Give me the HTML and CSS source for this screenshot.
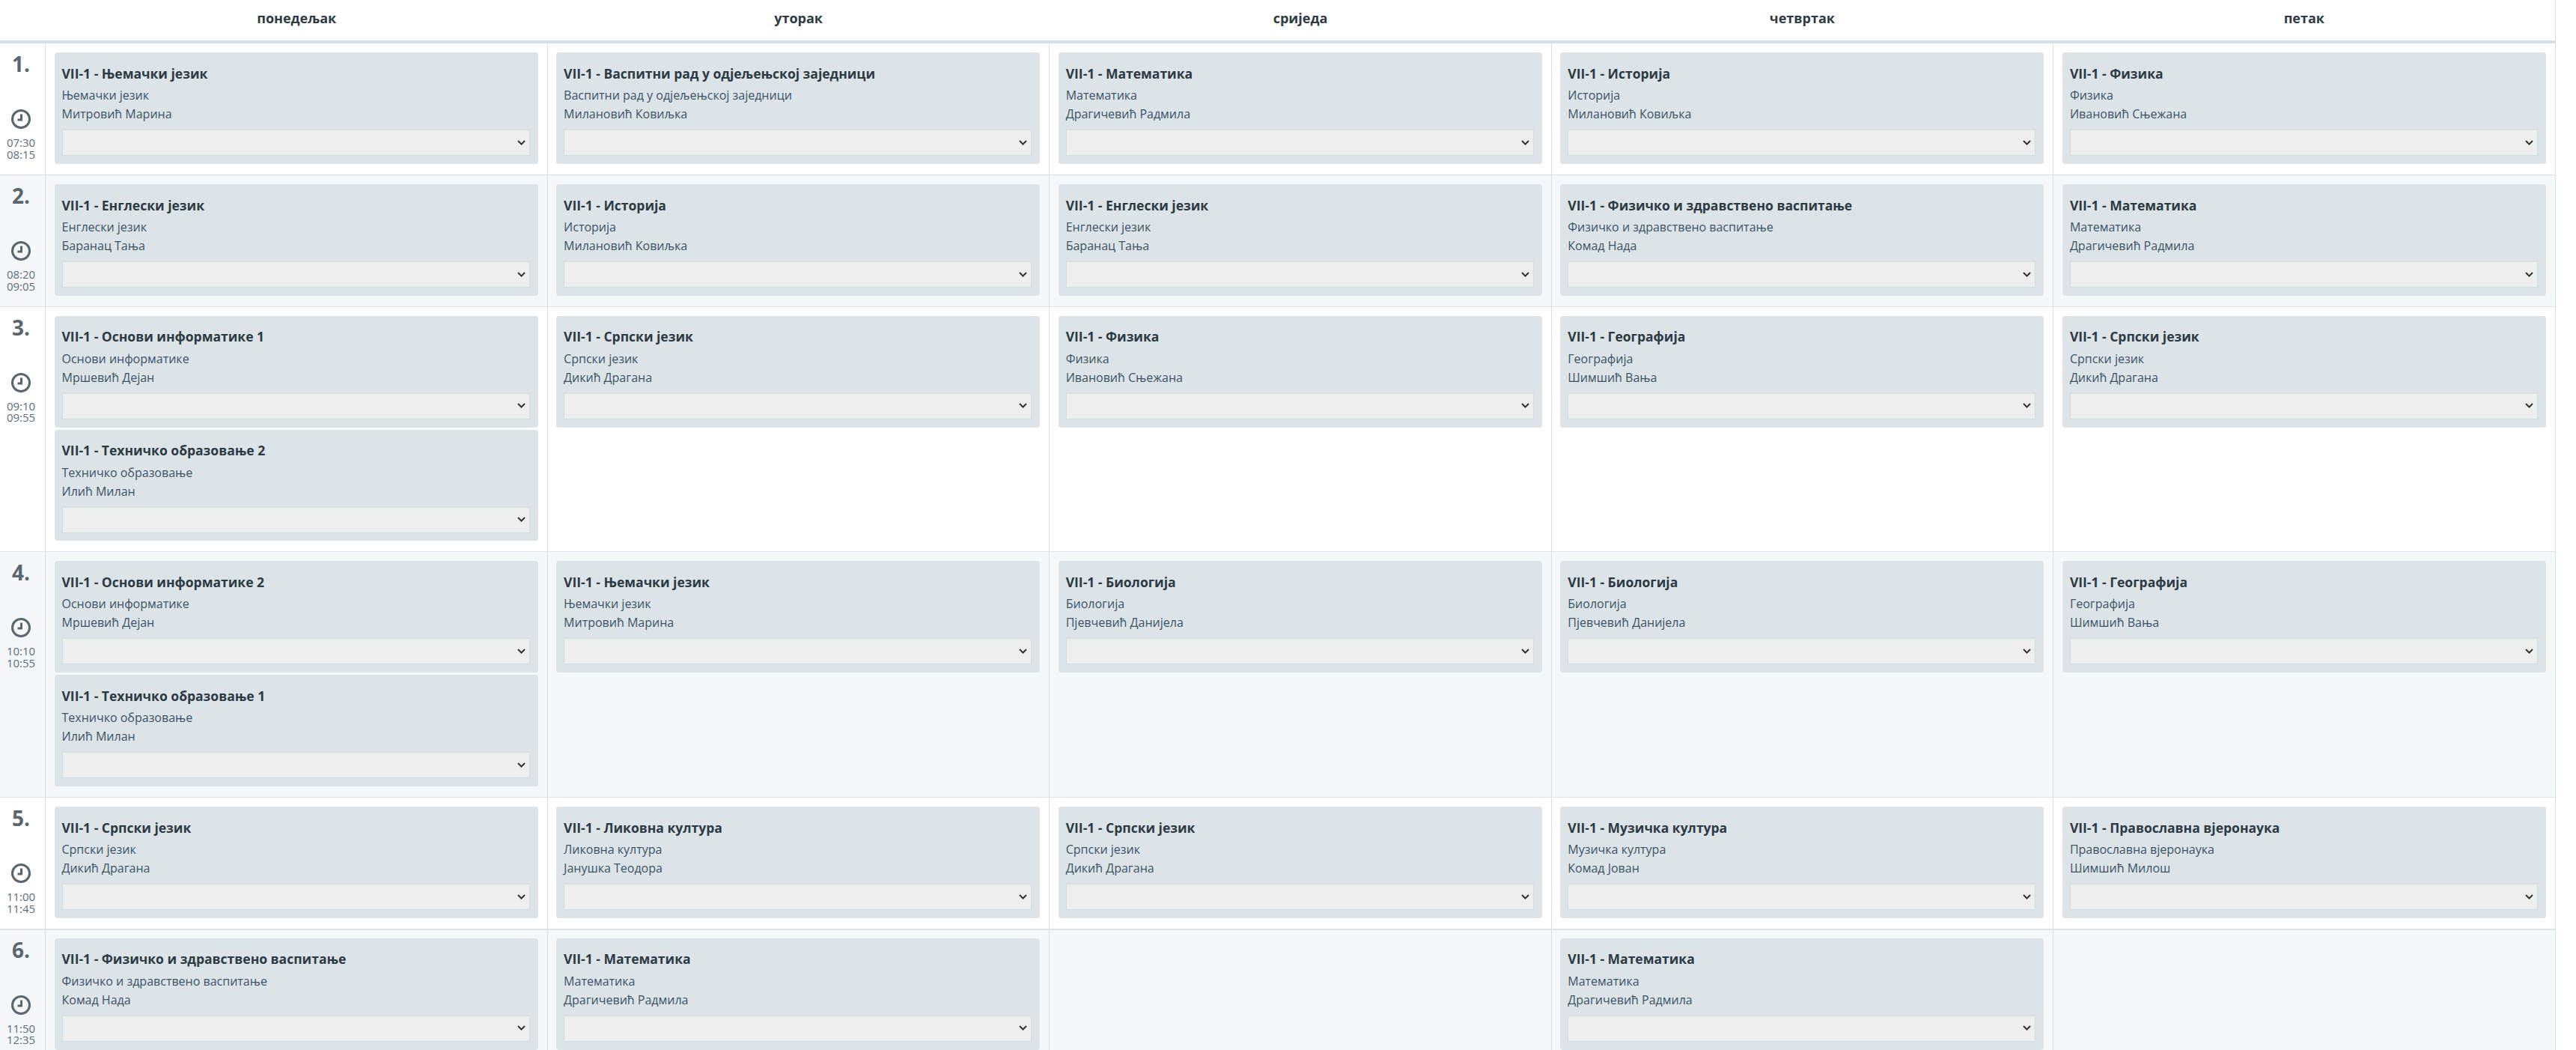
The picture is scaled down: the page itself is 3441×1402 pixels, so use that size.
FILE: index.html
```html
<!DOCTYPE html>
<html lang="sr">
<head>
<meta charset="utf-8">
<title>Распоред</title>
<link rel="stylesheet" href="styles.css">
</head>
<body>
<div class="timetable">
  <div class="head">
    <div class="head-cell"></div>
    <div class="head-cell">понедељак</div>
    <div class="head-cell">уторак</div>
    <div class="head-cell">сриједа</div>
    <div class="head-cell">четвртак</div>
    <div class="head-cell">петак</div>
  </div>

  <div class="row">
    <div class="slot"><div class="num">1.</div><svg class="clock" viewBox="0 0 26 26"><circle cx="13" cy="13" r="11.5"/><path d="M13.5 6.5v7.5H8.5"/></svg><div class="times">07:30<br>08:15</div></div>
    <div class="cell"><div class="card"><h4>VII-1 - Њемачки језик</h4><p>Њемачки језик</p><p>Митровић Марина</p><select></select></div></div>
    <div class="cell"><div class="card"><h4>VII-1 - Васпитни рад у одјељењској заједници</h4><p>Васпитни рад у одјељењској заједници</p><p>Милановић Ковиљка</p><select></select></div></div>
    <div class="cell"><div class="card"><h4>VII-1 - Математика</h4><p>Математика</p><p>Драгичевић Радмила</p><select></select></div></div>
    <div class="cell"><div class="card"><h4>VII-1 - Историја</h4><p>Историја</p><p>Милановић Ковиљка</p><select></select></div></div>
    <div class="cell"><div class="card"><h4>VII-1 - Физика</h4><p>Физика</p><p>Ивановић Сњежана</p><select></select></div></div>
  </div>

  <div class="row alt">
    <div class="slot"><div class="num">2.</div><svg class="clock" viewBox="0 0 26 26"><circle cx="13" cy="13" r="11.5"/><path d="M13.5 6.5v7.5H8.5"/></svg><div class="times">08:20<br>09:05</div></div>
    <div class="cell"><div class="card"><h4>VII-1 - Енглески језик</h4><p>Енглески језик</p><p>Баранац Тања</p><select></select></div></div>
    <div class="cell"><div class="card"><h4>VII-1 - Историја</h4><p>Историја</p><p>Милановић Ковиљка</p><select></select></div></div>
    <div class="cell"><div class="card"><h4>VII-1 - Енглески језик</h4><p>Енглески језик</p><p>Баранац Тања</p><select></select></div></div>
    <div class="cell"><div class="card"><h4>VII-1 - Физичко и здравствено васпитање</h4><p>Физичко и здравствено васпитање</p><p>Комад Нада</p><select></select></div></div>
    <div class="cell"><div class="card"><h4>VII-1 - Математика</h4><p>Математика</p><p>Драгичевић Радмила</p><select></select></div></div>
  </div>

  <div class="row">
    <div class="slot"><div class="num">3.</div><svg class="clock" viewBox="0 0 26 26"><circle cx="13" cy="13" r="11.5"/><path d="M13.5 6.5v7.5H8.5"/></svg><div class="times">09:10<br>09:55</div></div>
    <div class="cell">
      <div class="card"><h4>VII-1 - Основи информатике 1</h4><p>Основи информатике</p><p>Мршевић Дејан</p><select></select></div>
      <div class="card"><h4>VII-1 - Техничко образовање 2</h4><p>Техничко образовање</p><p>Илић Милан</p><select></select></div>
    </div>
    <div class="cell"><div class="card"><h4>VII-1 - Српски језик</h4><p>Српски језик</p><p>Дикић Драгана</p><select></select></div></div>
    <div class="cell"><div class="card"><h4>VII-1 - Физика</h4><p>Физика</p><p>Ивановић Сњежана</p><select></select></div></div>
    <div class="cell"><div class="card"><h4>VII-1 - Географија</h4><p>Географија</p><p>Шимшић Вања</p><select></select></div></div>
    <div class="cell"><div class="card"><h4>VII-1 - Српски језик</h4><p>Српски језик</p><p>Дикић Драгана</p><select></select></div></div>
  </div>

  <div class="row alt">
    <div class="slot"><div class="num">4.</div><svg class="clock" viewBox="0 0 26 26"><circle cx="13" cy="13" r="11.5"/><path d="M13.5 6.5v7.5H8.5"/></svg><div class="times">10:10<br>10:55</div></div>
    <div class="cell">
      <div class="card"><h4>VII-1 - Основи информатике 2</h4><p>Основи информатике</p><p>Мршевић Дејан</p><select></select></div>
      <div class="card"><h4>VII-1 - Техничко образовање 1</h4><p>Техничко образовање</p><p>Илић Милан</p><select></select></div>
    </div>
    <div class="cell"><div class="card"><h4>VII-1 - Њемачки језик</h4><p>Њемачки језик</p><p>Митровић Марина</p><select></select></div></div>
    <div class="cell"><div class="card"><h4>VII-1 - Биологија</h4><p>Биологија</p><p>Пјевчевић Данијела</p><select></select></div></div>
    <div class="cell"><div class="card"><h4>VII-1 - Биологија</h4><p>Биологија</p><p>Пјевчевић Данијела</p><select></select></div></div>
    <div class="cell"><div class="card"><h4>VII-1 - Географија</h4><p>Географија</p><p>Шимшић Вања</p><select></select></div></div>
  </div>

  <div class="row">
    <div class="slot"><div class="num">5.</div><svg class="clock" viewBox="0 0 26 26"><circle cx="13" cy="13" r="11.5"/><path d="M13.5 6.5v7.5H8.5"/></svg><div class="times">11:00<br>11:45</div></div>
    <div class="cell"><div class="card"><h4>VII-1 - Српски језик</h4><p>Српски језик</p><p>Дикић Драгана</p><select></select></div></div>
    <div class="cell"><div class="card"><h4>VII-1 - Ликовна култура</h4><p>Ликовна култура</p><p>Јанушка Теодора</p><select></select></div></div>
    <div class="cell"><div class="card"><h4>VII-1 - Српски језик</h4><p>Српски језик</p><p>Дикић Драгана</p><select></select></div></div>
    <div class="cell"><div class="card"><h4>VII-1 - Музичка култура</h4><p>Музичка култура</p><p>Комад Јован</p><select></select></div></div>
    <div class="cell"><div class="card"><h4>VII-1 - Православна вјеронаука</h4><p>Православна вјеронаука</p><p>Шимшић Милош</p><select></select></div></div>
  </div>

  <div class="row alt last">
    <div class="slot"><div class="num">6.</div><svg class="clock" viewBox="0 0 26 26"><circle cx="13" cy="13" r="11.5"/><path d="M13.5 6.5v7.5H8.5"/></svg><div class="times">11:50<br>12:35</div></div>
    <div class="cell"><div class="card"><h4>VII-1 - Физичко и здравствено васпитање</h4><p>Физичко и здравствено васпитање</p><p>Комад Нада</p><select></select></div></div>
    <div class="cell"><div class="card"><h4>VII-1 - Математика</h4><p>Математика</p><p>Драгичевић Радмила</p><select></select></div></div>
    <div class="cell"></div>
    <div class="cell"><div class="card"><h4>VII-1 - Математика</h4><p>Математика</p><p>Драгичевић Радмила</p><select></select></div></div>
    <div class="cell"></div>
  </div>
</div>
</body>
</html>
```

FILE: styles.css
```css
html {
  overflow: hidden;
  height: 100%;
}

body {
  margin: 0;
  background: #fff;
  font-family: "Open Sans", "Noto Sans", sans-serif;
  color: #2e3b44;
}

.timetable {
  width: 3414px;
}

.head,
.row {
  display: grid;
  grid-template-columns: 61px repeat(5, 1fr);
}

.head {
  height: 58.3px;
  box-sizing: border-box;
  border-bottom: 4px solid #d5e0e5;
  border-right: 1px solid #dcdfe1;
}

.head-cell {
  display: flex;
  align-items: center;
  justify-content: center;
  font-size: 18px;
  font-weight: 700;
  padding-bottom: 6px;
}

.row {
  border-bottom: 1px solid #dfe3e5;
}

.row.alt {
  background: #f5f8f9;
}

.row.last {
  border-top: 1px solid #dfe3e5;
}

.row.last .cell {
  padding-top: 11px;
}

.row.last .num {
  margin-top: 7px;
}

.slot {
  border-right: 1px solid #dcdfe1;
  display: flex;
  flex-direction: column;
  align-items: center;
  color: #5d6c7a;
  padding-right: 4px;
}

.num {
  font-size: 28px;
  font-weight: 700;
  line-height: 38px;
  margin-top: 8px;
  color: #59666f;
}

.clock {
  width: 26px;
  height: 26px;
  margin-top: 42px;
  fill: none;
  stroke: #59666f;
  stroke-width: 3;
}

.times {
  font-size: 15px;
  line-height: 15.5px;
  margin-top: 11px;
}

.cell {
  border-right: 1px solid #dcdfe1;
  padding: 12px 12px 14px 11.5px;
  display: flex;
  flex-direction: column;
  gap: 3px;
  min-width: 0;
}

.card {
  height: 148.8px;
  box-sizing: border-box;
  background: #dce4e7;
  border-radius: 4px;
  padding: 16.5px 11px 10px 10px;
}

.card h4 {
  margin: 0 0 6.5px;
  font-size: 17.5px;
  line-height: 22px;
  font-weight: 700;
  color: #2c3a44;
}

.card p {
  margin: 0;
  font-size: 16px;
  line-height: 25px;
  color: #3d5366;
}

.card select {
  display: block;
  width: 100%;
  height: 36px;
  margin-top: 7px;
  box-sizing: border-box;
  appearance: none;
  background: #eeeeee url("data:image/svg+xml,%3Csvg xmlns='http://www.w3.org/2000/svg' width='11' height='7' viewBox='0 0 11 7'%3E%3Cpath d='M1 1l4.5 4.5L10 1' fill='none' stroke='%23333' stroke-width='2'/%3E%3C/svg%3E") no-repeat right 5px center;
  border: 1px solid #d3dee3;
  border-radius: 0;
  box-shadow: inset 0 1px 1px rgba(0, 0, 0, 0.06);
}
```
